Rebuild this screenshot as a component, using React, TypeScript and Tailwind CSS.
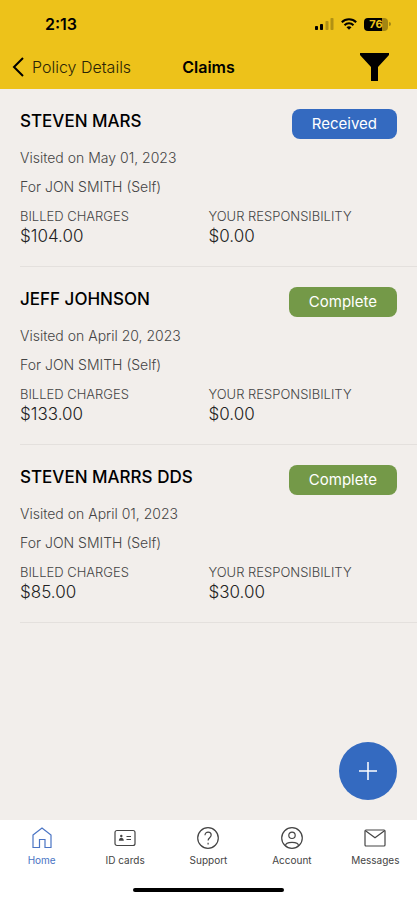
type Claim = {
    provider: string;
    visited: string;
    patient: string;
    billed: string;
    responsibility: string;
    status: "Received" | "Complete";
};

const claims: Claim[] = [
    {
        provider: "STEVEN MARS",
        visited: "May 01, 2023",
        patient: "JON SMITH (Self)",
        billed: "$104.00",
        responsibility: "$0.00",
        status: "Received",
    },
    {
        provider: "JEFF JOHNSON",
        visited: "April 20, 2023",
        patient: "JON SMITH (Self)",
        billed: "$133.00",
        responsibility: "$0.00",
        status: "Complete",
    },
    {
        provider: "STEVEN MARRS DDS",
        visited: "April 01, 2023",
        patient: "JON SMITH (Self)",
        billed: "$85.00",
        responsibility: "$30.00",
        status: "Complete",
    },
];

const tabs = [
    {
        label: "Home",
        icon: <path d="M3 9 12 2l9 7v12.500h-6V13.500H9.500v8H3z" />,
    },
    {
        label: "ID cards",
        icon: (
            <>
                <rect x="2" y="4.5" width="20" height="15" rx="2" />
                <circle cx="8.3" cy="10" r="1.200" fill="currentColor" stroke="none" />
                <path d="M5.800 14.800c0-4 5-4 5 0z" fill="currentColor" stroke="none" />
                <path d="M13.500 10.500H18M13.500 13.500H18" />
            </>
        ),
    },
    {
        label: "Support",
        icon: (
            <>
                <circle cx="12" cy="12" r="10.3" />
                <path d="M9 9.300c0-4.400 6.200-4 6.200-.2 0 2.700-3.100 2.600-3.100 5.400" />
                <path d="M12.100 16.800v1.600" />
            </>
        ),
    },
    {
        label: "Account",
        icon: (
            <>
                <circle cx="12" cy="12" r="10.3" />
                <circle cx="12" cy="9.300" r="3.200" />
                <path d="M5.500 19.800c0-4.600 13-4.600 13 0" />
            </>
        ),
    },
    {
        label: "Messages",
        icon: (
            <>
                <rect x="2" y="4" width="20" height="16" rx="1" />
                <path d="m2.500 4.800 9.500 7 9.500-7" />
            </>
        ),
    },
];

function StatusBar() {
    return (
        <div className="flex h-12 items-center justify-between pr-[26px] pl-[45px]">
            <span className="text-base leading-5 font-semibold">2:13</span>
            <div className="flex items-center gap-[7px]">
                <svg className="h-3 w-[19px]" viewBox="0 0 19 12" fill="currentColor" aria-hidden="true">
                    <rect x="0" y="8" width="3" height="4" rx=".8" />
                    <rect x="5" y="6" width="3" height="6" rx=".8" />
                    <rect x="10.5" y="3" width="3" height="9" rx=".8" opacity=".25" />
                    <rect x="15.5" y="0" width="3" height="12" rx=".8" opacity=".25" />
                </svg>
                <svg className="h-3 w-4" viewBox="0 0 16 12" fill="none" stroke="currentColor" strokeWidth="2" aria-hidden="true">
                    <path d="M.8 4.3c4-4 10.400-4 14.400 0" />
                    <path d="M3.500 7.200c2.500-2.500 6.500-2.500 9 0" />
                    <path d="M8 11.800 5.500 9.200c1.400-1.300 3.600-1.300 5 0z" fill="currentColor" stroke="none" />
                </svg>
                <div className="flex items-center gap-px">
                    <span className="flex h-[13px] w-6 items-center justify-center rounded bg-linear-to-r from-black from-76% to-[#a28613] to-76% text-[11px] leading-3 font-bold text-[#edc21a]">
                        76
                    </span>
                    <span className="h-1 w-[2px] rounded-r bg-[#a28613]" />
                </div>
            </div>
        </div>
    );
}

function ClaimRow({ claim }: { claim: Claim }) {
    return (
        <li className="ml-5 border-b border-[#e4e0dd] pt-5 pr-5 pb-5">
            <div className="flex h-[30px] items-start justify-between">
                <h2 className="text-[17px] leading-6 font-medium text-black">{claim.provider}</h2>
                <button
                    type="button"
                    className={`h-[30px] rounded-lg px-5 text-[15px] leading-5 text-white ${
                        claim.status === "Received" ? "bg-[#346ac0]" : "bg-[#749948]"
                    }`}
                >
                    {claim.status}
                </button>
            </div>
            <p className="mt-2 text-sm leading-[22px] font-light">Visited on {claim.visited}</p>
            <p className="mt-[7px] text-sm leading-[22px] font-light">For {claim.patient}</p>
            <dl className="mt-2 grid grid-cols-2">
                <div>
                    <dt className="text-[13px] leading-5 font-light">BILLED CHARGES</dt>
                    <dd className="text-[17px] leading-5 font-light text-[#222]">{claim.billed}</dd>
                </div>
                <div>
                    <dt className="text-[13px] leading-5 font-light">YOUR RESPONSIBILITY</dt>
                    <dd className="text-[17px] leading-5 font-light text-[#222]">{claim.responsibility}</dd>
                </div>
            </dl>
        </li>
    );
}

export default function App() {
    return (
        <div className="flex min-h-screen flex-col bg-[#f2eeeb] font-['Inter',sans-serif] text-[#444]">
            <header className="bg-[#edc21a] text-black">
                <StatusBar />
                <div className="grid h-[41px] grid-cols-[1fr_auto_1fr] items-center px-3 pb-1">
                    <a href="#policy" className="flex items-center gap-2 text-base leading-6 font-light text-[#2b2506]">
                        <svg className="h-5 w-3" viewBox="0 0 12 20" fill="none" stroke="black" strokeWidth="2" aria-hidden="true">
                            <path d="M11 1 2 10l9 9" />
                        </svg>
                        Policy Details
                    </a>
                    <h1 className="text-base leading-6 font-semibold">Claims</h1>
                    <button type="button" aria-label="Filter" className="justify-self-end pr-4">
                        <svg className="h-7 w-[29px]" viewBox="0 0 29 28" fill="currentColor" aria-hidden="true">
                            <path d="M0 0h29v2L18 14v14h-7V14L0 2z" />
                        </svg>
                    </button>
                </div>
            </header>

            <main className="relative flex-1">
                <ul>
                    {claims.map((claim) => (
                        <ClaimRow key={claim.provider} claim={claim} />
                    ))}
                </ul>
                <button
                    type="button"
                    aria-label="Add claim"
                    className="absolute right-5 bottom-5 flex size-[58px] items-center justify-center rounded-full bg-[#346ac0] text-white"
                >
                    <svg className="size-[18px]" viewBox="0 0 18 18" stroke="currentColor" strokeWidth="1.5" aria-hidden="true">
                        <path d="M9 0v18M0 9h18" />
                    </svg>
                </button>
            </main>

            <footer className="bg-white">
                <nav className="grid grid-cols-5 pt-[6px]">
                    {tabs.map((tab) => (
                        <a
                            key={tab.label}
                            href="#tab"
                            className={`flex flex-col items-center gap-1 text-[10px] leading-3 ${
                                tab.label === "Home" ? "text-[#4a74c4]" : "text-[#444]"
                            }`}
                        >
                            <svg className="size-6" viewBox="0 0 24 24" fill="none" stroke="currentColor" strokeWidth="1.2" aria-hidden="true">
                                {tab.icon}
                            </svg>
                            {tab.label}
                        </a>
                    ))}
                </nav>
                <div className="mx-auto mt-[22px] mb-2 h-1 w-[36%] rounded-full bg-black" />
            </footer>
        </div>
    );
}
